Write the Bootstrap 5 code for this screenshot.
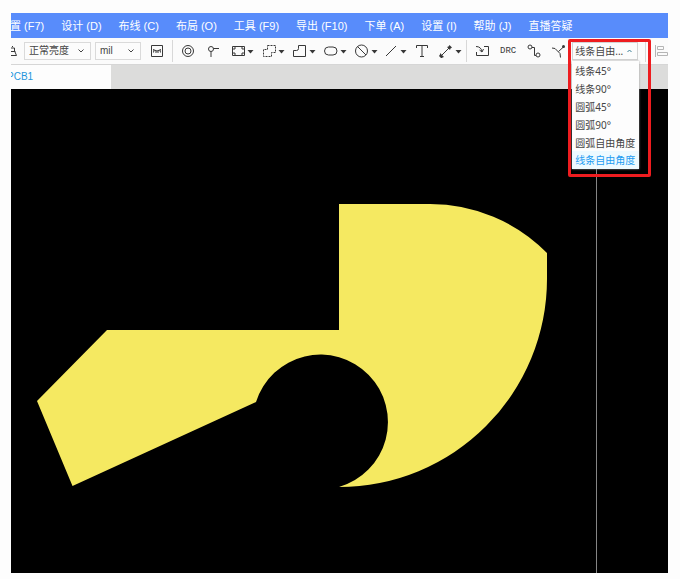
<!DOCTYPE html>
<html lang="zh-CN">
<head>
<meta charset="utf-8">
<meta name="viewport" content="width=device-width, initial-scale=1">
<title>PCB1</title>
<link href="https://cdn.jsdelivr.net/npm/bootstrap@5.3.0/dist/css/bootstrap.min.css" rel="stylesheet">
<style>
  body { font-family: "Liberation Sans", "Noto Sans CJK SC", sans-serif; font-size: 10px; line-height: 16px; color: #333; background: #fdfdfd; }
  .page-shell { padding: 13px 12px 6px 11px; }
  .editor { background: #000; }
  .menu-bar { height: 25px; background: #588cfb; gap: 17px; font-size: 11px; margin: 0; }
  .menu-bar .nav-link { color: #fff; padding: 0; white-space: nowrap; }
  .menu-bar .nav-item:first-child { margin-left: -1px; }
  .tool-bar { height: 26px; background: #fbfbfb; }
  .tool-bar svg { display: block; fill: none; stroke: #383838; stroke-width: 1; flex: none; }
  .tool-btn { display: flex; align-items: center; gap: 2px; padding: 0; border: 0; background: none; color: #383838; flex: none; }
  .tool-btn .caret-icon { fill: #383838; stroke: none; }
  .tool-btn .muted-icon { stroke: #b5b5b5; }
  .via-btn { margin: 0 10px 0 12px; }
  .drc-btn { font: 9px/14px "Liberation Mono", monospace; }
  .box-select { appearance: none; height: 18px; padding: 0 4px; border: 1px solid #dadada; border-radius: 0; font-size: 10px; line-height: 16px; color: #444; flex: none;
    background: #fcfcfc url("data:image/svg+xml,%3Csvg xmlns='http://www.w3.org/2000/svg' viewBox='0 0 6 6'%3E%3Cpath d='M.5 1.5 3 4 5.500 1.500' fill='none' stroke='%23444'/%3E%3C/svg%3E") no-repeat right 6px center / 6px 6px; }
  .select-bright { width: 67px; margin-left: 7px; }
  .select-unit { width: 46px; margin: 0 9px 0 4px; }
  .divider { width: 1px; height: 22px; background: #d8d8d8; flex: none; }
  .gap-8 { gap: 8px; }
  .gap-11 { gap: 11px; }
  .route-select { margin: 0 7px 0 6px; font-family: "Noto Sans", "Noto Sans CJK SC", sans-serif; }
  .route-toggle { width: 66px; height: 18px; padding: 0 5px 0 2px; border: 1px solid #d4d4d4; background: #fcfcfc; color: #444; line-height: 16px; white-space: nowrap; }
  .route-toggle svg { stroke: #3a7f96; }
  .route-menu { top: 19px; left: 0; min-width: 67px; padding: 0; border: 0; border-radius: 0; background: #fdfdfd; font-size: 10px; box-shadow: 0 0 2px #999; }
  .route-menu .dropdown-item { height: 18px; padding: 0 3px; line-height: 20px; color: #444; }
  .route-menu .dropdown-item.active { color: #1c9cf2; background: #eefaff; line-height: 18px; }
  .callout-frame { top: -3px; left: -4px; width: 83px; height: 138px; border: 3px solid #ee1c1f; border-radius: 2px; z-index: 1001; pointer-events: none; }
  .tab-strip { height: 25px; background: #dcdcdb; border-top: 1px solid #d6d6d6; }
  .doc-tab { width: 100px; background: #fdfdfd; color: #2496dc; text-decoration: none; line-height: 24px; }
  .doc-tab span { margin-left: -4px; }
</style>
<script src="https://cdn.jsdelivr.net/npm/bootstrap@5.3.0/dist/js/bootstrap.bundle.min.js"></script>
</head>
<body>
<svg class="d-none" aria-hidden="true">
  <symbol id="caret" viewBox="0 0 7 6"><path d="M.5 2h6L3.500 5.500z"/></symbol>
</svg>
<div class="page-shell min-vh-100 d-flex flex-column">
  <main class="editor flex-grow-1 overflow-hidden">
    <ul class="menu-bar nav flex-nowrap align-items-center">
      <li class="nav-item"><a class="nav-link" href="#">置 (F7)</a></li>
      <li class="nav-item"><a class="nav-link" href="#">设计 (D)</a></li>
      <li class="nav-item"><a class="nav-link" href="#">布线 (C)</a></li>
      <li class="nav-item"><a class="nav-link" href="#">布局 (O)</a></li>
      <li class="nav-item"><a class="nav-link" href="#">工具 (F9)</a></li>
      <li class="nav-item"><a class="nav-link" href="#">导出 (F10)</a></li>
      <li class="nav-item"><a class="nav-link" href="#">下单 (A)</a></li>
      <li class="nav-item"><a class="nav-link" href="#">设置 (I)</a></li>
      <li class="nav-item"><a class="nav-link" href="#">帮助 (J)</a></li>
      <li class="nav-item"><a class="nav-link" href="#">直播答疑</a></li>
    </ul>

    <div class="tool-bar d-flex align-items-center" role="toolbar" aria-label="工具栏">
      <button class="tool-btn" type="button" aria-label="图层"><svg width="6" height="14"><path d="M0 4h3.500v3M0 7.500h4.500M0 11.500h5.500L4 8M1 2.500h1"/></svg></button>
      <select class="box-select select-bright" aria-label="亮度"><option>正常亮度</option></select>
      <select class="box-select select-unit" aria-label="单位"><option>mil</option></select>
      <button class="tool-btn me-2" type="button" aria-label="隐藏"><svg width="14" height="14"><path d="M1.500 1.500h11v11h-11z"/><path d="M3 5.500q4 3 8 0M4 6 3.500 8.500M6 7v2M8 7v2M10 6l.5 2.500"/></svg></button>
      <span class="divider me-2"></span>
      <button class="tool-btn" type="button" aria-label="焊盘"><svg width="14" height="14"><circle cx="7" cy="7" r="5.500"/><circle cx="7" cy="7" r="3"/></svg></button>
      <button class="tool-btn via-btn" type="button" aria-label="过孔"><svg width="14" height="14"><circle cx="4" cy="5" r="2.500"/><path d="M6.500 4.500H12M4 7.500V13"/></svg></button>
      <div class="d-flex align-items-center gap-8">
        <button class="tool-btn" type="button" aria-label="板框"><svg width="14" height="14"><path d="M1.500 2.500h12v9h-12zM3 6V4h2M10 4h2v2M3 8v2h2M10 10h2V8"/></svg><svg class="caret-icon" width="7" height="6"><use href="#caret"/></svg></button>
        <button class="tool-btn" type="button" aria-label="区域"><svg width="14" height="14"><path stroke-dasharray="2 1" d="M5.500 1.500h8v7h-4v4h-8v-7h4z"/></svg><svg class="caret-icon" width="7" height="6"><use href="#caret"/></svg></button>
        <button class="tool-btn" type="button" aria-label="铺铜"><svg width="14" height="14"><path d="M5.500 1.500h7v11h-12v-6h3q2 0 2-2z"/></svg><svg class="caret-icon" width="7" height="6"><use href="#caret"/></svg></button>
        <button class="tool-btn" type="button" aria-label="填充"><svg width="14" height="14"><rect x=".5" y="3" width="12.500" height="8" rx="4"/></svg><svg class="caret-icon" width="7" height="6"><use href="#caret"/></svg></button>
        <button class="tool-btn" type="button" aria-label="禁止区域"><svg width="14" height="14"><circle cx="6.500" cy="7" r="6"/><path d="m2.500 2.500 8.500 8.500"/></svg><svg class="caret-icon" width="7" height="6"><use href="#caret"/></svg></button>
        <button class="tool-btn" type="button" aria-label="线条"><svg width="12" height="14"><path d="m0 12 10-10"/></svg><svg class="caret-icon" width="7" height="6"><use href="#caret"/></svg></button>
        <button class="tool-btn" type="button" aria-label="文本"><svg width="14" height="14"><path d="M1.500 4V1.500h11V4M7 1.500v11M5 12.500h4"/></svg></button>
        <button class="tool-btn" type="button" aria-label="尺寸"><svg width="16" height="14"><path d="m4 12 9-9"/><path fill="#383838" stroke="none" d="M10 3 11.500 2.500l1-1.500 2.500 2.500-1.500 1-.5 1.500zM3 9l4 4-1.500.500-1 1L2 12l1-1.500z"/></svg><svg class="caret-icon" width="7" height="6"><use href="#caret"/></svg></button>
      </div>
      <span class="divider ms-1 me-2"></span>
      <div class="d-flex align-items-center gap-11">
        <button class="tool-btn" type="button" aria-label="导入"><svg width="14" height="14"><path d="M1 2.500q5 0 6 5M4.500 6l2.500 2 1.500-3M9 2.500h4.500v9H1.500V8"/></svg></button>
        <button class="tool-btn drc-btn" type="button">DRC</button>
        <button class="tool-btn" type="button" aria-label="布线"><svg width="14" height="14"><circle cx="3" cy="3" r="2"/><circle cx="11" cy="11" r="2"/><path d="M5 3.500h2.500v8H9"/></svg></button>
        <button class="tool-btn" type="button" aria-label="推挤"><svg width="14" height="14"><path d="m0 4 3 .500 5 5 .500 4M6.500 7.500 12 2.500"/><circle cx="11.500" cy="2.500" r="1.500" fill="#383838" stroke="none"/></svg></button>
      </div>
      <div class="route-select dropdown position-relative">
        <button class="route-toggle d-flex align-items-center justify-content-between" type="button" aria-expanded="true" aria-label="布线拐角">线条自由...<svg width="5" height="6"><path d="m.5 4 2-2 2 2"/></svg></button>
        <ul class="route-menu dropdown-menu show">
          <li><button class="dropdown-item" type="button">线条45°</button></li>
          <li><button class="dropdown-item" type="button">线条90°</button></li>
          <li><button class="dropdown-item" type="button">圆弧45°</button></li>
          <li><button class="dropdown-item" type="button">圆弧90°</button></li>
          <li><button class="dropdown-item" type="button">圆弧自由角度</button></li>
          <li><button class="dropdown-item active" type="button">线条自由角度</button></li>
        </ul>
        <div class="callout-frame position-absolute"></div>
      </div>
      <span class="divider me-2"></span>
      <button class="tool-btn" type="button" aria-label="对齐"><svg class="muted-icon" width="14" height="14"><path d="M1.500 1v12M3.500 2.500h6v3h-6zM3.500 8.500h10v3h-10z"/></svg></button>
    </div>

    <div class="tab-strip d-flex">
      <a class="doc-tab" href="#"><span>PCB1</span></a>
    </div>

    <svg class="d-block w-100 h-auto" viewBox="0 0 657 484" role="img" aria-label="PCB 画布">
      <path d="M585.500 0V484" stroke="#858585"/>
      <path fill="#f5e961" d="M328 115H419A164 164 0 0 1 536 164V190A208 208 0 0 1 328 398A67.500 67.500 0 1 0 245 313L61.500 397L26 312L96 241H328Z"/>
    </svg>
  </main>
</div>
</body>
</html>
